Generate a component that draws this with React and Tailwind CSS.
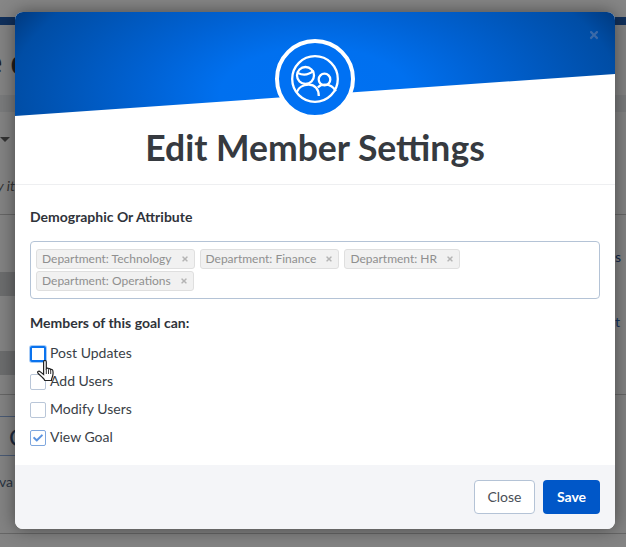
import React from 'react';
import { FaCheck, FaTimes } from 'react-icons/fa';

const tags = ['Department: Technology', 'Department: Finance', 'Department: HR', 'Department: Operations'];

const options = [
  { label: 'Post Updates', focused: true },
  { label: 'Add Users' },
  { label: 'Modify Users' },
  { label: 'View Goal', checked: true },
];

const Tag = ({ label }) => (
  <span className="flex h-5 items-center rounded-[3px] border border-[#dfdfdf] bg-[#f1f1f1] px-[5px] text-xs leading-none text-[#8f8f8f]">
    {label}
    <FaTimes className="ml-[9px] h-[8px] w-[8px] text-[#b4b4b4]" />
  </span>
);

const Option = ({ label, focused, checked }) => {
  let box = 'border-[#b9c6d8]';
  if (focused) box = 'border-2 border-[#0a73ee] ring-1 ring-[#a9cdf7]';
  if (checked) box = 'border-[#7fa7de]';

  return (
    <label className="flex h-[16px] items-center gap-[4px] text-sm text-[#3a3f47]">
      <span className={`flex h-4 w-4 items-center justify-center rounded-[2px] border bg-white ${box}`}>
        {checked && <FaCheck className="h-[10px] w-[10px] text-[#5b93e0]" />}
      </span>
      <span className="mb-[2px]">{label}</span>
    </label>
  );
};

// hand pointer sitting over the first checkbox
const Cursor = () => (
  <svg className="absolute left-[37px] top-[360px]" width="18" height="24" viewBox="0 0 18 24">
    <path
      d="M8 .5c.8 0 1.300.7 1.300 1.500v6.500c.6-.6 1.900-.5 2.200.4.600-.5 1.800-.3 2.100.6.700-.4 2-.1 2.200 1 .4 2 .3 4.500-.4 6.300-.5 1.300-1 2.400-1 3.700H7.800c-.5-1.300-1.700-2.300-3-3.600L1.200 13.500c-.7-.9-.6-1.700-.1-2.100.7-.5 1.600-.2 2.300.5l3.200 2.600V2c0-.8.600-1.500 1.400-1.500z"
      fill="#fff"
      stroke="#222"
      strokeWidth="1.200"
    />
    <path d="M9.300 9v5M11.500 9.500v4.500M13.700 10v4" stroke="#222" strokeWidth="0.9" fill="none" />
  </svg>
);

const App = () => {
  return (
    <div className="relative h-[547px] w-[626px] overflow-hidden bg-[#838383] font-['Lato','Liberation_Sans',sans-serif]">
      {/* page behind the overlay */}
      <div className="h-[17px] bg-[#868686]" />
      <div className="h-2 bg-[#10305c]" />
      <div className="h-[70px] pt-[16px] text-[34px] font-bold leading-[40px] whitespace-nowrap text-[#1d1d1d]">
        <span className="-ml-[16px] inline-block">e d</span>
      </div>
      <div className="h-[17px] bg-[#7a7b7c]" />
      <div className="h-[102px] pt-[25px]">
        <div className="h-0 w-0 border-x-[5px] border-t-[5px] border-x-transparent border-t-[#333]" />
        <div className="mt-[35px] text-sm italic leading-[18px] whitespace-nowrap text-[#333]">
          <span className="-ml-[3px] inline-block">y it</span>
        </div>
      </div>
      <div className="h-[58px] border-t border-[#666]">
        <div className="ml-[615px] mt-[33px] text-sm leading-[18px] text-[#12284a]">s</div>
      </div>
      <div className="h-6 w-[100px] bg-[#6c6d6e]" />
      <div className="h-[55px]">
        <div className="ml-[615px] pt-[17px] text-sm leading-[18px] text-[#12325e]">t</div>
      </div>
      <div className="h-6 w-[100px] bg-[#6c6d6e]" />
      <div className="h-5 border-b border-[#666]" />
      <div className="h-[21px]" />
      <div className="h-10 w-[100px] border-y border-[#4a5a74] pl-[9px] pt-[2px] text-[24px] leading-[36px] text-[#1c2a3e]">C</div>
      <div className="h-[77px] pt-[17px] text-sm leading-[18px] whitespace-nowrap text-[#2a3442]">
        <span className="-ml-[1px] inline-block">va</span>
      </div>
      <div className="border-t border-[#666]" />

      {/* modal */}
      <div className="absolute left-[15px] top-[12px] flex h-[517px] w-[600px] flex-col overflow-hidden rounded-[8px] bg-white shadow-[0_0_18px_rgba(0,0,0,0.45)]">
        <div className="relative h-[173px] shrink-0 border-b border-[#eeeff1]">
          <div className="h-[104px] bg-[radial-gradient(ellipse_380px_190px_at_50%_83px,#0071f3_0%,#0070ef_25%,#0062d4_45%,#004da5_80%,#00306c_95%)] [clip-path:polygon(0_0,100%_0,100%_62px,0_104px)]" />
          <FaTimes className="absolute right-[15px] top-[17px] h-[12px] w-[12px] text-[#3b6aa8]" />
          <div className="absolute left-[260px] top-[27px] flex h-[80px] w-[80px] items-center justify-center rounded-full border-[4px] border-white bg-[#0071f3]">
            <svg width="48" height="48" viewBox="0 0 48 48" fill="none" stroke="#fff" strokeWidth="2.300">
              <circle cx="24" cy="24" r="22.800" />
              <circle cx="14.500" cy="20.500" r="8.500" />
              <path d="M6.800 18c5 2.500 11 2 16-2.500" />
              <circle cx="33.500" cy="24.500" r="5.800" />
              <path d="M5.800 37c1.500-4.500 6.500-7.300 12-7.300 6 0 10 4.500 10 11.300" />
              <path d="M26.800 32.500c1.800-1.800 4.200-2.800 7.200-2.800 4.600 0 8.700 2.600 10.800 6.600" />
            </svg>
          </div>
          <h2 className="absolute inset-x-0 top-[114px] text-center text-[35.500px] font-bold leading-[44px] text-[#363a40]">
            Edit Member Settings
          </h2>
        </div>

        <div className="flex-1 px-[15px] pt-[23px]">
          <div className="text-sm font-bold leading-[18px] text-[#2f333a]">Demographic Or Attribute</div>

          <div className="mt-[15px] flex h-[58px] flex-wrap content-start gap-x-[5px] gap-y-[2px] rounded-[4px] border border-[#b4c3d6] px-[5px] pt-[7px]">
            {tags.map((tag) => (
              <Tag key={tag} label={tag} />
            ))}
          </div>

          <div className="mt-[15px] text-sm font-bold leading-[18px] text-[#2f333a]">Members of this goal can:</div>

          <div className="mt-[14px] flex flex-col gap-[12px]">
            {options.map((option) => (
              <Option key={option.label} {...option} />
            ))}
          </div>
        </div>

        <div className="flex h-[64px] shrink-0 items-center justify-end gap-[8px] bg-[#f4f5f8] pr-[15px]">
          <button className="h-[34px] w-[61px] rounded-[4px] border border-[#b4c3d6] bg-white text-sm text-[#4a4f57]">Close</button>
          <button className="h-[34px] w-[57px] rounded-[4px] bg-[#0057c8] text-sm font-bold text-white">Save</button>
        </div>
      </div>

      <Cursor />
    </div>
  );
};

export default App;
